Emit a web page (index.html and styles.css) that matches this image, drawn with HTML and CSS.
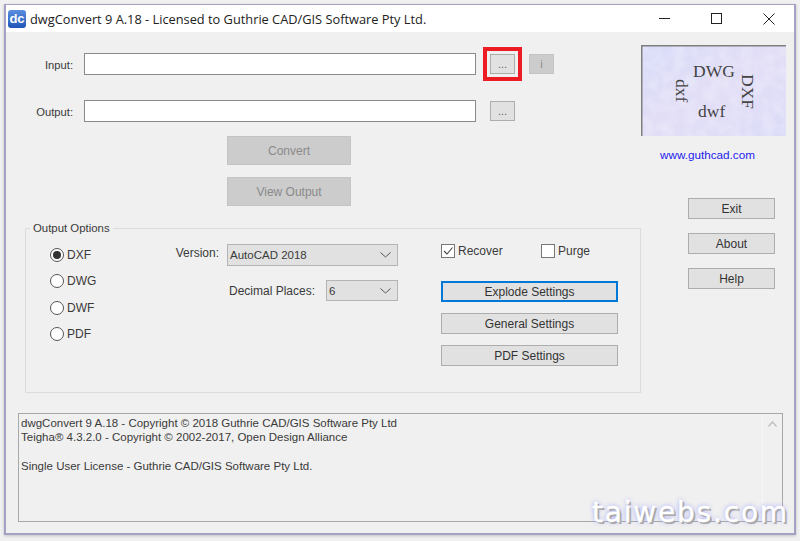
FILE: index.html
```html
<!DOCTYPE html>
<html lang="en">

<head>
    <meta charset="UTF-8" />
    <title>dwgConvert 9 A.18</title>
    <link rel="stylesheet" href="styles.css">
</head>

<body>
    <div class="window">
        <header class="titlebar">
            <span class="app-icon">dc</span>
            <span class="title">dwgConvert 9 A.18 - Licensed to Guthrie CAD/GIS Software Pty Ltd.</span>
            <div class="win-controls">
                <svg class="win-min" width="11" height="11" viewBox="0 0 11 11"><path d="M0 5.5H11" stroke="#222" fill="none" /></svg>
                <svg class="win-max" width="11" height="11" viewBox="0 0 11 11"><rect x="0.5" y="0.5" width="10" height="10" stroke="#222" fill="none" /></svg>
                <svg class="win-close" width="12" height="12" viewBox="0 0 12 12"><path d="M0.5 0.5L11.5 11.5M11.5 0.5L0.5 11.5" stroke="#222" fill="none" /></svg>
            </div>
        </header>

        <main class="client">
            <div class="upper">
                <div class="form">
                    <div class="file-grid">
                        <label class="file-label">Input:</label>
                        <input class="path" type="text" />
                        <button class="btn btn-browse marked">...</button>
                        <button class="btn btn-browse disabled">i</button>
                        <label class="file-label">Output:</label>
                        <input class="path" type="text" />
                        <button class="btn btn-browse">...</button>
                    </div>

                    <div class="actions">
                        <button class="btn btn-action disabled">Convert</button>
                        <button class="btn btn-action disabled">View Output</button>
                    </div>

                    <fieldset class="options">
                        <legend>Output Options</legend>
                        <div class="radios">
                            <div class="radio-row"><span class="radio checked"></span>DXF</div>
                            <div class="radio-row"><span class="radio"></span>DWG</div>
                            <div class="radio-row"><span class="radio"></span>DWF</div>
                            <div class="radio-row"><span class="radio"></span>PDF</div>
                        </div>
                        <div class="combos">
                            <div class="combo-row version-row">
                                <span class="version-label">Version:</span>
                                <div class="combo combo-wide">AutoCAD 2018
                                    <svg width="11" height="6" viewBox="0 0 11 6"><path d="M0.5 0.5L5.5 5L10.5 0.5" stroke="#555" fill="none" /></svg>
                                </div>
                            </div>
                            <div class="combo-row decimal-row">
                                <span>Decimal Places:</span>
                                <div class="combo combo-small">6
                                    <svg width="11" height="6" viewBox="0 0 11 6"><path d="M0.5 0.5L5.5 5L10.5 0.5" stroke="#555" fill="none" /></svg>
                                </div>
                            </div>
                        </div>
                        <div class="settings">
                            <div class="checks">
                                <div class="check-row check-recover">
                                    <span class="check">
                                        <svg width="12" height="12" viewBox="0 0 12 12"><path d="M2 6L5 9L10.5 2.5" stroke="#444" stroke-width="1.1" fill="none" /></svg>
                                    </span>Recover
                                </div>
                                <div class="check-row"><span class="check"></span>Purge</div>
                            </div>
                            <button class="btn btn-settings focused">Explode Settings</button>
                            <button class="btn btn-settings">General Settings</button>
                            <button class="btn btn-settings">PDF Settings</button>
                        </div>
                    </fieldset>
                </div>

                <aside class="side">
                    <svg class="logo" width="145" height="91" viewBox="0 0 145 91">
                        <defs>
                            <linearGradient id="logoBg" x1="0" y1="0" x2="1" y2="1">
                                <stop offset="0" stop-color="#d9dcf9" />
                                <stop offset="0.5" stop-color="#e2def6" />
                                <stop offset="1" stop-color="#dcdcf8" />
                            </linearGradient>
                            <filter id="mottle" x="0" y="0" width="100%" height="100%">
                                <feTurbulence type="fractalNoise" baseFrequency="0.09" numOctaves="2" seed="4" />
                                <feColorMatrix values="0 0 0 0 1  0 0 0 0 1  0 0 0 0 1  0.5 0 0 0 -0.17" />
                            </filter>
                        </defs>
                        <rect width="145" height="91" fill="url(#logoBg)" />
                        <rect width="145" height="91" filter="url(#mottle)" />
                        <path d="M0.75 91V0.75H145" stroke="#7f7f7f" stroke-width="1.5" fill="none" />
                        <text class="logo-text" x="52" y="32" font-size="17.5">DWG</text>
                        <text class="logo-text" x="57" y="72" font-size="17.5">dwf</text>
                        <text class="logo-text" transform="translate(101 29) rotate(90)" font-size="17.5">DXF</text>
                        <text class="logo-text" transform="translate(35 34) rotate(90)" font-size="17.5">dxf</text>
                    </svg>
                    <a class="site-link" href="#">www.guthcad.com</a>
                    <div class="side-buttons">
                        <button class="btn btn-side">Exit</button>
                        <button class="btn btn-side">About</button>
                        <button class="btn btn-side">Help</button>
                    </div>
                </aside>
            </div>

            <div class="log">
                <div class="log-text">
                    <div>dwgConvert 9 A.18 - Copyright © 2018 Guthrie CAD/GIS Software Pty Ltd</div>
                    <div>Teigha® 4.3.2.0 - Copyright © 2002-2017, Open Design Alliance</div>
                    <div>&nbsp;</div>
                    <div>Single User License - Guthrie CAD/GIS Software Pty Ltd.</div>
                </div>
                <div class="scrollbar">
                    <svg width="9" height="6" viewBox="0 0 9 6"><path d="M0.5 5.5L4.5 1L8.5 5.5" stroke="#bcbcbc" stroke-width="1.2" fill="none" /></svg>
                </div>
            </div>
        </main>
    </div>
    <div class="watermark">taiwebs.com</div>
</body>

</html>
```

FILE: styles.css
```css
* {
    margin: 0;
    padding: 0;
    box-sizing: border-box;
}

body {
    width: 800px;
    height: 541px;
    padding: 4px;
    overflow: hidden;
    position: relative;
    background-color: #f1f1f1;
    font-family: 'Liberation Sans', sans-serif;
    font-size: 12px;
    color: #3a3a3a;
}

.window {
    width: 792px;
    height: 531px;
    border: 2px solid #a3a2c2;
    border-top-width: 1px;
    background-color: #f0f0f0;
    box-shadow: 0 1px 3px rgba(0, 0, 0, 0.2);
}

.titlebar {
    height: 27px;
    display: flex;
    align-items: center;
    padding-left: 2px;
    background-color: #ffffff;
}

.app-icon {
    width: 18px;
    height: 18px;
    border-radius: 3px;
    background: linear-gradient(#5b8fe0, #1f55b8);
    color: #ffffff;
    font-size: 13px;
    font-weight: 700;
    line-height: 17px;
    text-align: center;
}

.title {
    margin-left: 4px;
    font-family: 'Open Sans', sans-serif;
    font-size: 12.8px;
    color: #222;
}

.win-controls {
    margin-left: auto;
    margin-right: 19px;
    display: flex;
    align-items: center;
    gap: 41px;
}

.upper {
    display: flex;
}

.form {
    width: 635px;
    padding-top: 21px;
}

.file-grid {
    display: grid;
    grid-template-columns: 64px 392px 25px 25px;
    grid-auto-rows: 22px;
    column-gap: 14px;
    row-gap: 25px;
    align-items: center;
}

.file-label {
    margin-right: -3px;
    padding-top: 1px;
    text-align: right;
    font-size: 11.2px;
}

.path {
    height: 22px;
    border: 1px solid #8a8a8a;
    background-color: #ffffff;
}

.btn {
    display: block;
    border: 1px solid #adadad;
    background-color: #e1e1e1;
    font-family: inherit;
    font-size: 12px;
    color: #333;
}

.btn.disabled {
    border-color: #c4c4c4;
    background-color: #cccccc;
    color: #8a8a8a;
}

.btn-browse {
    height: 20px;
    width: 25px;
    font-size: 11px;
    color: #666;
}

.marked {
    outline: 4px solid #ed1c24;
    outline-offset: 3px;
}

.actions {
    margin: 14px 0 0 221px;
}

.btn-action {
    width: 124px;
    height: 29px;
    margin-bottom: 12px;
}

.options {
    margin: 14px 0 0 19px;
    width: 616px;
    height: 173px;
    padding-left: 24px;
    display: flex;
    border: 1px solid #dcdcdc;
}

.options legend {
    margin-left: -20px;
    padding: 0 3px;
    font-size: 11.4px;
    line-height: 16px;
}

.radios {
    width: 126px;
    padding-top: 11px;
}

.radio-row {
    display: flex;
    align-items: center;
    gap: 3px;
    height: 16px;
    margin-bottom: 10.3px;
}

.radio {
    width: 14px;
    height: 14px;
    border: 1px solid #555;
    border-radius: 50%;
    background-color: #ffffff;
    display: flex;
    align-items: center;
    justify-content: center;
}

.radio.checked::after {
    content: "";
    width: 8px;
    height: 8px;
    border-radius: 50%;
    background-color: #333;
}

.combos {
    width: 222px;
    padding-top: 8px;
}

.combo-row {
    display: flex;
    align-items: center;
    justify-content: flex-end;
}

.version-row {
    gap: 8px;
    height: 22px;
}

.version-label {
    padding-bottom: 5px;
}

.decimal-row {
    gap: 11px;
    height: 21px;
    margin-top: 14px;
}

.combo {
    flex-shrink: 0;
    height: 100%;
    display: flex;
    align-items: center;
    justify-content: space-between;
    padding: 0 3px 0 2px;
    border: 1px solid #b4b4b4;
    background-color: #e1e1e1;
    font-size: 11.5px;
}

.combo svg {
    margin-right: 3px;
}

.combo-wide {
    width: 171px;
}

.combo-small {
    width: 72px;
}

.settings {
    margin-left: 43px;
    width: 177px;
    padding-top: 7px;
}

.checks {
    display: flex;
    height: 15px;
    margin-bottom: 23px;
}

.check-row {
    display: flex;
    align-items: center;
    gap: 3px;
}

.check-recover {
    width: 100px;
}

.check {
    width: 14px;
    height: 14px;
    border: 1px solid #777;
    background-color: #ffffff;
    display: flex;
    align-items: center;
    justify-content: center;
}

.btn-settings {
    width: 177px;
    height: 21px;
    margin-bottom: 11px;
}

.focused {
    border: 2px solid #0078d7;
}

.side {
    width: 145px;
    padding-top: 13px;
    display: flex;
    flex-direction: column;
}

.logo {
    display: block;
}

.logo-text {
    font-family: 'Liberation Serif', serif;
    fill: #444;
}

.site-link {
    width: 133px;
    margin-top: 12px;
    text-align: center;
    font-size: 11.7px;
    color: #2222ee;
    text-decoration: none;
}

.side-buttons {
    margin: 37px 0 0 47px;
}

.btn-side {
    width: 87px;
    height: 21px;
    margin-bottom: 14px;
}

.log {
    margin: 20px 0 0 12px;
    width: 765px;
    height: 109px;
    display: flex;
    border: 1px solid #a8a8a8;
}

.log-text {
    flex: 1;
    padding: 2px 0 0 2px;
    font-size: 11.5px;
    line-height: 14.3px;
}

.scrollbar {
    width: 20px;
    padding: 7px 0 0 5px;
    border-left: 1px solid #f6f6f6;
}

.scrollbar svg {
    display: block;
}

.watermark {
    position: absolute;
    left: 592px;
    top: 496px;
    font-family: 'DejaVu Sans', sans-serif;
    font-size: 28px;
    letter-spacing: 1.8px;
    color: #ffffff;
    -webkit-text-stroke: 0.4px #ffffff;
    text-shadow: 2px 2px 0 #a9a9a9, 0 0 5px #9a9aff;
}
```
